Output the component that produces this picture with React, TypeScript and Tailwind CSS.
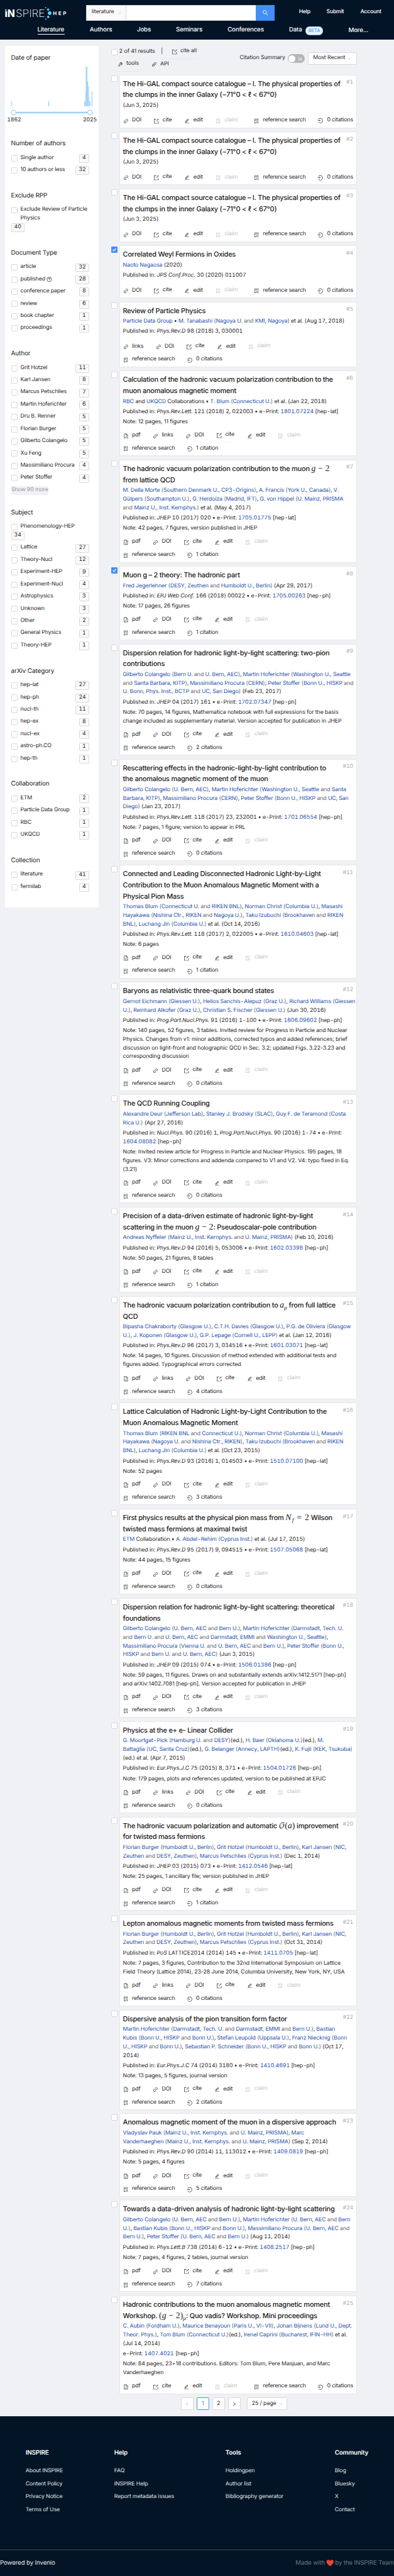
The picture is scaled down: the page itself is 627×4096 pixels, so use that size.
import React from "react";
import {
  AiOutlineApi,
  AiOutlineBarChart,
  AiOutlineDown,
  AiOutlineEdit,
  AiOutlineExport,
  AiOutlineFileDone,
  AiOutlineFilePdf,
  AiOutlineFileSearch,
  AiOutlineLeft,
  AiOutlineLink,
  AiOutlineLogin,
  AiOutlineQuestionCircle,
  AiOutlineRight,
  AiOutlineSearch,
  AiOutlineTool,
} from "react-icons/ai";

/* ---------- inline markup: {link}, *italic*, ~muted~ ---------- */

function Rich({ text }: { text: string }) {
  const parts = text.split(/(\{[^}]*\}|\*[^*]*\*|~[^~]*~)/).filter(Boolean);
  return (
    <>
      {parts.map((p, i) => {
        const inner = p.slice(1, -1);
        if (p[0] === "{") return <a key={i} className="text-[#1f50ae]">{inner}</a>;
        if (p[0] === "*") return <i key={i}>{inner}</i>;
        if (p[0] === "~") return <span key={i} className="text-[#666666]">{inner}</span>;
        return <span key={i}>{p}</span>;
      })}
    </>
  );
}

function muteAffiliations(line: string) {
  return line
    .replace(/\((?=\{)/g, "~(~")
    .replace(/\}\)/g, "}~)~")
    .replace(/\band(?= \{|$)/g, "~and~");
}

/* ---------- math in titles ---------- */

const serif = "font-['Liberation_Serif',serif] font-normal tracking-normal text-[22px] leading-none";

const GMinus2 = () => (
  <span className={serif}>
    <i>g</i>
    <span className="px-[6px]">−</span>2
  </span>
);
const AMu = () => (
  <span className={serif}>
    <i>a</i>
    <span className="relative top-[5px] text-[15px] italic">μ</span>
  </span>
);
const NfEq2 = () => (
  <span className={serif}>
    <i>N</i>
    <span className="relative top-[4px] pl-[2px] text-[15px] italic">f</span>
    <span className="px-[8px]">=</span>2
  </span>
);
const BigOA = () => (
  <span className={serif}>
    <span className="font-['DejaVu_Math_TeX_Gyre','DejaVu_Serif',serif] text-[20px]">𝒪</span>(<i>a</i>)
  </span>
);
const GMinus2Mu = () => (
  <span className={serif}>
    (<i>g</i>
    <span className="px-[6px]">−</span>2)
    <span className="relative top-[5px] text-[15px] italic">μ</span>
  </span>
);

/* ---------- data ---------- */

type Paper = {
  h: string;
  title: React.ReactNode[];
  authors: string[];
  pub?: string[];
  note?: string[];
  acts: string[];
  cites: string;
  checked?: boolean;
  single?: boolean;
};

const hiGal: Paper = {
  h: "h-[144.5px]",
  title: ["The Hi-GAL compact source catalogue – I. The physical properties of", "the clumps in the inner Galaxy (−71°0 < ℓ < 67°0)"],
  authors: ["(Jun 3, 2025)"],
  acts: ["DOI", "cite", "edit", "claim"],
  cites: "0 citations",
  single: true,
};
const STD = ["pdf", "DOI", "cite", "edit", "claim"];
const WITH_LINKS = ["pdf", "links", "DOI", "cite", "edit", "claim"];

const papers: Paper[] = [
  hiGal,
  hiGal,
  hiGal,
  {
    h: "h-[142.4px]",
    title: ["Correlated Weyl Fermions in Oxides"],
    authors: ["{Naoto Nagaosa} (2020)"],
    pub: ["Published in: *JPS Conf.Proc.* 30 (2020) 011007"],
    acts: ["DOI", "cite", "edit", "claim"],
    cites: "0 citations",
    checked: true,
    single: true,
  },
  {
    h: "h-[175.2px]",
    title: ["Review of Particle Physics"],
    authors: ["{Particle Data Group} • {M. Tanabashi} ({Nagoya U.} and {KMI, Nagoya}) et al. (Aug 17, 2018)"],
    pub: ["Published in: *Phys.Rev.D* 98 (2018) 3, 030001"],
    acts: ["links", "DOI", "cite", "edit", "claim"],
    cites: "0 citations",
  },
  {
    h: "h-[225.8px]",
    title: ["Calculation of the hadronic vacuum polarization contribution to the", "muon anomalous magnetic moment"],
    authors: ["{RBC} and\u00a0{UKQCD} Collaborations • {T. Blum} ({Connecticut U.}) et al. (Jan 22, 2018)"],
    pub: ["Published in: *Phys.Rev.Lett.* 121 (2018) 2, 022003 • e-Print: {1801.07224} [hep-lat]"],
    note: ["Note: 12 pages, 11 figures"],
    acts: WITH_LINKS,
    cites: "1 citation",
  },
  {
    h: "h-[270.2px]",
    title: [<>The hadronic vacuum polarization contribution to the muon <GMinus2 /></>, "from lattice QCD"],
    authors: [
      "{M. Della Morte} ({Southern Denmark U., CP3-Origins}), {A. Francis} ({York U., Canada}), {V.}",
      "{Gülpers} ({Southampton U.}), {G. Herdoíza} ({Madrid, IFT}), {G. von Hippel} ({U. Mainz, PRISMA}",
      "and {Mainz U., Inst. Kernphys.}) et al. (May 4, 2017)",
    ],
    pub: ["Published in: *JHEP* 10 (2017) 020 • e-Print: {1705.01775} [hep-lat]"],
    note: ["Note: 42 pages, 7 figures, version published in JHEP"],
    acts: STD,
    cites: "1 citation",
  },
  {
    h: "h-[197px]",
    title: ["Muon g – 2 theory: The hadronic part"],
    authors: ["{Fred Jegerlehner} ({DESY, Zeuthen} and {Humboldt U., Berlin}) (Apr 29, 2017)"],
    pub: ["Published in: *EPJ Web Conf.* 166 (2018) 00022 • e-Print: {1705.00263} [hep-ph]"],
    note: ["Note: 17 pages, 26 figures"],
    acts: STD,
    cites: "1 citation",
    checked: true,
  },
  {
    h: "h-[291.9px]",
    title: ["Dispersion relation for hadronic light-by-light scattering: two-pion", "contributions"],
    authors: [
      "{Gilberto Colangelo} ({Bern U.} and {U. Bern, AEC}), {Martin Hoferichter} ({Washington U., Seattle}",
      "and {Santa Barbara, KITP}), {Massimiliano Procura} ({CERN}), {Peter Stoffer} ({Bonn U., HISKP} and",
      "{U. Bonn, Phys. Inst., BCTP} and {UC, San Diego}) (Feb 23, 2017)",
    ],
    pub: ["Published in: *JHEP* 04 (2017) 161 • e-Print: {1702.07347} [hep-ph]"],
    note: [
      "Note: 70 pages, 14 figures, Mathematica notebook with full expressions for the basis",
      "change included as supplementary material. Version accepted for publication in JHEP",
    ],
    acts: STD,
    cites: "2 citations",
  },
  {
    h: "h-[268.9px]",
    title: ["Rescattering effects in the hadronic-light-by-light contribution to", "the anomalous magnetic moment of the muon"],
    authors: [
      "{Gilberto Colangelo} ({U. Bern, AEC}), {Martin Hoferichter} ({Washington U., Seattle} and {Santa}",
      "{Barbara, KITP}), {Massimiliano Procura} ({CERN}), {Peter Stoffer} ({Bonn U., HISKP} and {UC, San}",
      "{Diego}) (Jan 23, 2017)",
    ],
    pub: ["Published in: *Phys.Rev.Lett.* 118 (2017) 23, 232001 • e-Print: {1701.06554} [hep-ph]"],
    note: ["Note: 7 pages, 1 figure; version to appear in PRL"],
    acts: STD,
    cites: "0 citations",
  },
  {
    h: "h-[297.2px]",
    title: [
      "Connected and Leading Disconnected Hadronic Light-by-Light",
      "Contribution to the Muon Anomalous Magnetic Moment with a",
      "Physical Pion Mass",
    ],
    authors: [
      "{Thomas Blum} ({Connecticut U.} and {RIKEN BNL}), {Norman Christ} ({Columbia U.}), {Masashi}",
      "{Hayakawa} ({Nishina Ctr., RIKEN} and {Nagoya U.}), {Taku Izubuchi} ({Brookhaven} and {RIKEN}",
      "{BNL}), {Luchang Jin} ({Columbia U.}) et al. (Oct 14, 2016)",
    ],
    pub: ["Published in: *Phys.Rev.Lett.* 118 (2017) 2, 022005 • e-Print: {1610.04603} [hep-lat]"],
    note: ["Note: 6 pages"],
    acts: STD,
    cites: "1 citation",
  },
  {
    h: "h-[285.9px]",
    title: ["Baryons as relativistic three-quark bound states"],
    authors: [
      "{Gernot Eichmann} ({Giessen U.}), {Helios Sanchis-Alepuz} ({Graz U.}), {Richard Williams} ({Giessen}",
      "{U.}), {Reinhard Alkofer} ({Graz U.}), {Christian S. Fischer} ({Giessen U.}) (Jun 30, 2016)",
    ],
    pub: ["Published in: *Prog.Part.Nucl.Phys.* 91 (2016) 1-100 • e-Print: {1606.09602} [hep-ph]"],
    note: [
      "Note: 140 pages, 52 figures, 3 tables. Invited review for Progress in Particle and Nuclear",
      "Physics. Changes from v1: minor additions, corrected typos and added references; brief",
      "discussion on light-front and holographic QCD in Sec. 3.2; updated Figs. 3.22-3.23 and",
      "corresponding discussion",
    ],
    acts: STD,
    cites: "0 citations",
  },
  {
    h: "h-[284.9px]",
    title: ["The QCD Running Coupling"],
    authors: [
      "{Alexandre Deur} ({Jefferson Lab}), {Stanley J. Brodsky} ({SLAC}), {Guy F. de Teramond} ({Costa}",
      "{Rica U.}) (Apr 27, 2016)",
    ],
    pub: [
      "Published in: *Nucl.Phys.* 90 (2016) 1, *Prog.Part.Nucl.Phys.* 90 (2016) 1-74 • e-Print:",
      "{1604.08082} [hep-ph]",
    ],
    note: [
      "Note: Invited review article for Progress in Particle and Nuclear Physics. 195 pages, 18",
      "figures. V3: Minor corrections and addenda compared to V1 and V2. V4: typo fixed in Eq.",
      "(3.21)",
    ],
    acts: STD,
    cites: "0 citations",
  },
  {
    h: "h-[226.2px]",
    title: [
      "Precision of a data-driven estimate of hadronic light-by-light",
      <>scattering in the muon <GMinus2 />: Pseudoscalar-pole contribution</>,
    ],
    authors: ["{Andreas Nyffeler} ({Mainz U., Inst. Kernphys.} and {U. Mainz, PRISMA}) (Feb 10, 2016)"],
    pub: ["Published in: *Phys.Rev.D* 94 (2016) 5, 053006 • e-Print: {1602.03398} [hep-ph]"],
    note: ["Note: 50 pages, 21 figures, 8 tables"],
    acts: STD,
    cites: "1 citation",
  },
  {
    h: "h-[270.8px]",
    title: [<>The hadronic vacuum polarization contribution to <AMu /> from full lattice</>, "QCD"],
    authors: [
      "{Bipasha Chakraborty} ({Glasgow U.}), {C.T.H. Davies} ({Glasgow U.}), {P.G. de Oliviera} ({Glasgow}",
      "{U.}), {J. Koponen} ({Glasgow U.}), {G.P. Lepage} ({Cornell U., LEPP}) et al. (Jan 12, 2016)",
    ],
    pub: ["Published in: *Phys.Rev.D* 96 (2017) 3, 034516 • e-Print: {1601.03071} [hep-lat]"],
    note: [
      "Note: 14 pages, 10 figures. Discussion of method extended with additional tests and",
      "figures added. Typographical errors corrected",
    ],
    acts: WITH_LINKS,
    cites: "4 citations",
  },
  {
    h: "h-[269.1px]",
    title: ["Lattice Calculation of Hadronic Light-by-Light Contribution to the", "Muon Anomalous Magnetic Moment"],
    authors: [
      "{Thomas Blum} ({RIKEN BNL} and {Connecticut U.}), {Norman Christ} ({Columbia U.}), {Masashi}",
      "{Hayakawa} ({Nagoya U.} and {Nishina Ctr., RIKEN}), {Taku Izubuchi} ({Brookhaven} and {RIKEN}",
      "{BNL}), {Luchang Jin} ({Columbia U.}) et al. (Oct 23, 2015)",
    ],
    pub: ["Published in: *Phys.Rev.D* 93 (2016) 1, 014503 • e-Print: {1510.07100} [hep-lat]"],
    note: ["Note: 52 pages"],
    acts: STD,
    cites: "3 citations",
  },
  {
    h: "h-[226.1px]",
    title: [<>First physics results at the physical pion mass from <NfEq2 /> Wilson</>, "twisted mass fermions at maximal twist"],
    authors: ["{ETM} Collaboration • {A. Abdel-Rehim} ({Cyprus Inst.}) et al. (Jul 17, 2015)"],
    pub: ["Published in: *Phys.Rev.D* 95 (2017) 9, 094515 • e-Print: {1507.05068} [hep-lat]"],
    note: ["Note: 44 pages, 15 figures"],
    acts: STD,
    cites: "0 citations",
  },
  {
    h: "h-[313px]",
    title: ["Dispersion relation for hadronic light-by-light scattering: theoretical", "foundations"],
    authors: [
      "{Gilberto Colangelo} ({U. Bern, AEC} and {Bern U.}), {Martin Hoferichter} ({Darmstadt, Tech. U.}",
      "and {Bern U.} and {U. Bern, AEC} and {Darmstadt, EMMI} and {Washington U., Seattle}),",
      "{Massimiliano Procura} ({Vienna U.} and {U. Bern, AEC} and {Bern U.}), {Peter Stoffer} ({Bonn U.,}",
      "{HISKP} and {Bern U.} and {U. Bern, AEC}) (Jun 3, 2015)",
    ],
    pub: ["Published in: *JHEP* 09 (2015) 074 • e-Print: {1506.01386} [hep-ph]"],
    note: [
      "Note: 59 pages, 11 figures. Draws on and substantially extends arXiv:1412.5171 [hep-ph]",
      "and arXiv:1402.7081 [hep-ph]. Version accepted for publication in JHEP",
    ],
    acts: STD,
    cites: "3 citations",
  },
  {
    h: "h-[241.9px]",
    title: ["Physics at the e+ e- Linear Collider"],
    authors: [
      "{G. Moortgat-Pick} ({Hamburg U.} and {DESY})(ed.), {H. Baer} ({Oklahoma U.})(ed.), {M.}",
      "{Battaglia} ({UC, Santa Cruz})(ed.), {G. Belanger} ({Annecy, LAPTH})(ed.), {K. Fujii} ({KEK, Tsukuba})",
      "(ed.) et al. (Apr 7, 2015)",
    ],
    pub: ["Published in: *Eur.Phys.J.C* 75 (2015) 8, 371 • e-Print: {1504.01726} [hep-ph]"],
    note: ["Note: 179 pages, plots and references updated, version to be published at EPJC"],
    acts: WITH_LINKS,
    cites: "0 citations",
  },
  {
    h: "h-[248.1px]",
    title: [<>The hadronic vacuum polarization and automatic <BigOA /> improvement</>, "for twisted mass fermions"],
    authors: [
      "{Florian Burger} ({Humboldt U., Berlin}), {Grit Hotzel} ({Humboldt U., Berlin}), {Karl Jansen} ({NIC,}",
      "{Zeuthen} and {DESY, Zeuthen}), {Marcus Petschlies} ({Cyprus Inst.}) (Dec 1, 2014)",
    ],
    pub: ["Published in: *JHEP* 03 (2015) 073 • e-Print: {1412.0546} [hep-lat]"],
    note: ["Note: 25 pages, 1 ancillary file; version published in JHEP"],
    acts: STD,
    cites: "1 citation",
  },
  {
    h: "h-[242px]",
    title: ["Lepton anomalous magnetic moments from twisted mass fermions"],
    authors: [
      "{Florian Burger} ({Humboldt U., Berlin}), {Grit Hotzel} ({Humboldt U., Berlin}), {Karl Jansen} ({NIC,}",
      "{Zeuthen} and {DESY, Zeuthen}), {Marcus Petschlies} ({Cyprus Inst.}) (Oct 31, 2014)",
    ],
    pub: ["Published in: *PoS* LATTICE2014 (2014) 145 • e-Print: {1411.0705} [hep-lat]"],
    note: [
      "Note: 7 pages, 3 figures, Contribution to the 32nd International Symposium on Lattice",
      "Field Theory (Lattice 2014), 23-28 June 2014, Columbia University, New York, NY, USA",
    ],
    acts: WITH_LINKS,
    cites: "0 citations",
  },
  {
    h: "h-[263px]",
    title: ["Dispersive analysis of the pion transition form factor"],
    authors: [
      "{Martin Hoferichter} ({Darmstadt, Tech. U.} and {Darmstadt, EMMI} and {Bern U.}), {Bastian}",
      "{Kubis} ({Bonn U., HISKP} and {Bonn U.}), {Stefan Leupold} ({Uppsala U.}), {Franz Niecknig} ({Bonn}",
      "{U., HISKP} and {Bonn U.}), {Sebastian P. Schneider} ({Bonn U., HISKP} and {Bonn U.}) (Oct 17,",
      "2014)",
    ],
    pub: ["Published in: *Eur.Phys.J.C* 74 (2014) 3180 • e-Print: {1410.4691} [hep-ph]"],
    note: ["Note: 13 pages, 5 figures, journal version"],
    acts: STD,
    cites: "2 citations",
  },
  {
    h: "h-[220px]",
    title: ["Anomalous magnetic moment of the muon in a dispersive approach"],
    authors: [
      "{Vladyslav Pauk} ({Mainz U., Inst. Kernphys.} and {U. Mainz, PRISMA}), {Marc}",
      "{Vanderhaeghen} ({Mainz U., Inst. Kernphys.} and {U. Mainz, PRISMA}) (Sep 2, 2014)",
    ],
    pub: ["Published in: *Phys.Rev.D* 90 (2014) 11, 113012 • e-Print: {1409.0819} [hep-ph]"],
    note: ["Note: 5 pages, 4 figures"],
    acts: STD,
    cites: "5 citations",
  },
  {
    h: "h-[242px]",
    title: ["Towards a data-driven analysis of hadronic light-by-light scattering"],
    authors: [
      "{Gilberto Colangelo} ({U. Bern, AEC} and {Bern U.}), {Martin Hoferichter} ({U. Bern, AEC} and {Bern}",
      "{U.}), {Bastian Kubis} ({Bonn U., HISKP} and {Bonn U.}), {Massimiliano Procura} ({U. Bern, AEC} and",
      "{Bern U.}), {Peter Stoffer} ({U. Bern, AEC} and {Bern U.}) (Aug 11, 2014)",
    ],
    pub: ["Published in: *Phys.Lett.B* 738 (2014) 6-12 • e-Print: {1408.2517} [hep-ph]"],
    note: ["Note: 7 pages, 4 figures, 2 tables, journal version"],
    acts: STD,
    cites: "7 citations",
  },
  {
    h: "h-[259.2px]",
    title: [
      "Hadronic contributions to the muon anomalous magnetic moment",
      <>Workshop. <GMinus2Mu />: Quo vadis? Workshop. Mini proceedings</>,
    ],
    authors: [
      "{C. Aubin} ({Fordham U.}), {Maurice Benayoun} ({Paris U., VI-VII}), {Johan Bijnens} ({Lund U., Dept.}",
      "{Theor. Phys.}), {Tom Blum} ({Connecticut U.})(ed.), {Irenel Caprini} ({Bucharest, IFIN-HH}) et al.",
      "(Jul 14, 2014)",
    ],
    pub: ["e-Print: {1407.4021} [hep-ph]"],
    note: ["Note: 84 pages, 23+18 contributions. Editors: Tom Blum, Pere Masjuan, and Marc", "Vanderhaeghen"],
    acts: ["pdf", "cite", "edit", "claim"],
    cites: "0 citations",
    single: true,
  },
];

type Facet = { title: string; rows: [string, number][]; more?: string };

const facets: Facet[] = [
  { title: "Number of authors", rows: [["Single author", 4], ["10 authors or less", 32]] },
  { title: "Exclude RPP", rows: [["Exclude Review of Particle Physics", 40]] },
  {
    title: "Document Type",
    rows: [["article", 32], ["published", 28], ["conference paper", 8], ["review", 6], ["book chapter", 1], ["proceedings", 1]],
  },
  {
    title: "Author",
    rows: [
      ["Grit Hotzel", 11], ["Karl Jansen", 8], ["Marcus Petschlies", 7], ["Martin Hoferichter", 6], ["Dru B. Renner", 5],
      ["Florian Burger", 5], ["Gilberto Colangelo", 5], ["Xu Feng", 5], ["Massimiliano Procura", 4], ["Peter Stoffer", 4],
    ],
    more: "Show 90 more",
  },
  {
    title: "Subject",
    rows: [
      ["Phenomenology-HEP", 34], ["Lattice", 27], ["Theory-Nucl", 12], ["Experiment-HEP", 9], ["Experiment-Nucl", 4],
      ["Astrophysics", 3], ["Unknown", 3], ["Other", 2], ["General Physics", 1], ["Theory-HEP", 1],
    ],
  },
  {
    title: "arXiv Category",
    rows: [["hep-lat", 27], ["hep-ph", 24], ["nucl-th", 11], ["hep-ex", 8], ["nucl-ex", 4], ["astro-ph.CO", 1], ["hep-th", 1]],
  },
  { title: "Collaboration", rows: [["ETM", 2], ["Particle Data Group", 1], ["RBC", 1], ["UKQCD", 1]] },
  { title: "Collection", rows: [["literature", 41], ["fermilab", 4]] },
];

/* ---------- small parts ---------- */

function Checkbox({ checked = false }: { checked?: boolean }) {
  return checked ? (
    <div className="flex size-4 shrink-0 items-center justify-center rounded-[2px] bg-[#448ef7]">
      <svg viewBox="0 0 16 16" className="size-4" fill="none" stroke="white" strokeWidth="2">
        <path d="M4 8.2 7 11l4.8-6.4" />
      </svg>
    </div>
  ) : (
    <div className="size-4 shrink-0 rounded-[2px] border border-[#d9d9d9] bg-white" />
  );
}

const actionMeta: Record<string, { icon: React.ReactNode; w: string }> = {
  pdf: { icon: <AiOutlineFilePdf />, w: "w-[22px]" },
  links: { icon: <AiOutlineLink />, w: "w-[29px]" },
  DOI: { icon: <AiOutlineLink />, w: "w-6" },
  cite: { icon: <AiOutlineExport />, w: "w-6" },
  edit: { icon: <AiOutlineEdit />, w: "w-[25px]" },
  claim: { icon: <AiOutlineFileDone />, w: "w-[34px]" },
};

function Action({ kind }: { kind: string }) {
  const m = actionMeta[kind];
  const tone = kind === "claim" ? "text-[#bfbfbf]" : "text-[#262626]";
  if (kind === "cite")
    return (
      <span className={`mt-[0.5px] flex h-[34px] items-center gap-[8px] border-b border-black/[0.025] ${tone}`}>
        <span className="text-[15px]">{m.icon}</span>
        <span className={`mb-[2px] ${m.w}`}>{kind}</span>
      </span>
    );
  return (
    <span className={`flex h-[33.3px] items-center gap-[9px] ${tone}`}>
      <span className="text-[14px]">{m.icon}</span>
      <span className={`${m.w} ${kind === "claim" ? "mb-[1px]" : ""}`}>{kind}</span>
    </span>
  );
}

function PaperCard({ paper, n }: { paper: Paper; n: number }) {
  const trailing = (
    <>
      <span className="flex h-[33.3px] items-center gap-[9px]">
        <AiOutlineFileSearch className="text-[14px]" />
        <span className="w-[109px]">reference search</span>
      </span>
      <span className="flex h-[33.3px] items-center gap-[9px]">
        <AiOutlineLogin className="text-[15px]" />
        <span>{paper.cites}</span>
      </span>
    </>
  );
  return (
    <div className={`flex pb-[9px] ${paper.h}`}>
      <div className="w-[20.6px] pt-[2.5px]">
        <Checkbox checked={paper.checked} />
      </div>
      <article className="flex w-[604px] flex-col border border-[#e6e7ea] bg-white px-2 pt-[8px]">
        <div className="flex justify-between">
          <h2 className="text-[17.6px] leading-[28.3px] font-medium tracking-[-0.4px] text-[#1a1a1a]">
            {paper.title.map((t, i) => (
              <div key={i} className="h-[28.3px]">{t}</div>
            ))}
          </h2>
          <span className="-ml-4 pt-px leading-5 text-[#acacac] tabular-nums">#{n}</span>
        </div>
        <div className="mt-[2.8px] leading-[22px] tabular-nums">
          {paper.authors.map((l, i) => (
            <div key={i}><Rich text={muteAffiliations(l)} /></div>
          ))}
        </div>
        {paper.pub && (
          <div className="mt-1 leading-[22px] tabular-nums">
            {paper.pub.map((l, i) => (
              <div key={i}><Rich text={l} /></div>
            ))}
          </div>
        )}
        {paper.note && (
          <div className="mt-1 leading-[22px]">
            {paper.note.map((l, i) => (
              <div key={i}>{l}</div>
            ))}
          </div>
        )}
        <div className="mt-auto tracking-[-0.2px]">
          <div className="flex h-[33.3px] gap-[31px]">
            {paper.acts.map((a) => (
              <Action key={a} kind={a} />
            ))}
            {paper.single && <div className="ml-auto flex gap-[30px]">{trailing}</div>}
          </div>
          {!paper.single && <div className="flex gap-[30px]">{trailing}</div>}
        </div>
      </article>
    </div>
  );
}

function Count({ n }: { n: number }) {
  return (
    <div className="flex h-[22px] items-center justify-center self-start rounded-[2px] border border-[#d9d9d9] bg-[#fafafa] px-[6.5px] tabular-nums">
      {n}
    </div>
  );
}

function FacetRow({ label, n }: { label: string; n: number }) {
  const stacked = label === "Phenomenology-HEP" || label.startsWith("Exclude Review");
  if (stacked)
    return (
      <div className={`flex flex-col pt-[4.5px] ${label.startsWith("Exclude") ? "h-[75px]" : "h-[53px]"}`}>
        <div className="flex gap-2 leading-[22px]">
          <div className="pt-[3px]"><Checkbox /></div>
          <span className="w-[174px] whitespace-normal">{label}</span>
        </div>
        <Count n={n} />
      </div>
    );
  return (
    <div className="flex h-[31px] items-center gap-2">
      <Checkbox />
      <span className="flex flex-1 items-center gap-1">
        {label}
        {label === "published" && <AiOutlineQuestionCircle className="text-[14px]" />}
      </span>
      <div className="mt-px"><Count n={n} /></div>
    </div>
  );
}

function DateHistogram() {
  const bars = [
    [28, 2, 13], [121.5, 2.5, 13], [213, 3, 13], [216, 1, 38], [217, 4, 100], [221, 2, 63],
    [223, 2, 51], [225, 1, 26], [226, 2.7, 13], [232, 2, 38],
  ];
  return (
    <svg viewBox="0 0 238 140" className="block h-[140px] w-[238px]">
      {bars.map(([x, w, h], i) => (
        <rect key={i} x={x - 12} y={110 - h} width={w} height={h} fill="#a1d2fa" />
      ))}
      <rect x="22" y="124" width="194" height="4" fill="#a1d2fa" />
      <circle cx="22" cy="126" r="6" fill="white" stroke="#a1d2fa" strokeWidth="2" />
      <circle cx="216" cy="126" r="6" fill="white" stroke="#a1d2fa" strokeWidth="2" />
    </svg>
  );
}

function Logo() {
  return (
    <svg viewBox="0 0 170 40" className="block h-10 w-[170px]" fill="white">
      <text x="-1" y="30.7" fontSize="26.5" fontWeight="800" textLength="26" lengthAdjust="spacingAndGlyphs">ıN</text>
      <circle cx="2.2" cy="13" r="2.3" fill="#63d1fb" />
      <text x="27" y="30.7" fontSize="26.5" fontWeight="200" textLength="74" lengthAdjust="spacingAndGlyphs">SPIRE</text>
      <g fill="#63d1fb">
        <circle cx="103.3" cy="6.7" r="1.6" />
        <circle cx="109.4" cy="11.4" r="2.8" />
        <circle cx="113.4" cy="20.4" r="4.6" />
        <circle cx="109.7" cy="30" r="3" />
        <circle cx="103.5" cy="35.4" r="1.6" />
      </g>
      <text x="121.5" y="25" fontSize="12.8" fontWeight="700" textLength="34" lengthAdjust="spacing">HEP</text>
    </svg>
  );
}

const navItems: [string, string][] = [
  ["Authors", "w-14"],
  ["Jobs", "w-[35px]"],
  ["Seminars", "w-[67px]"],
  ["Conferences", "w-[92px]"],
];

const footerCols: { title: string; w: string; items: string[] }[] = [
  { title: "INSPIRE", w: "w-[225px]", items: ["About INSPIRE", "Content Policy", "Privacy Notice", "Terms of Use"] },
  { title: "Help", w: "w-[282.5px]", items: ["FAQ", "INSPIRE Help", "Report metadata issues"] },
  { title: "Tools", w: "w-[277.5px]", items: ["Holdingpen", "Author list", "Bibliography generator"] },
  { title: "Community", w: "w-[100px]", items: ["Blog", "Bluesky", "X", "Contact"] },
];

/* ---------- page ---------- */

export default function App() {
  return (
    <div className="w-[1000.5px] overflow-hidden bg-[#f0f1f5] font-['Inter',sans-serif] text-[14px] leading-[22px] tracking-[-0.13px] whitespace-nowrap text-[#262626] [text-rendering:geometricPrecision] [zoom:0.6267]">
      <header className="h-[100px] bg-[#021426] font-medium text-white">
        <div className="flex h-[52px] pt-3 pl-3">
          <Logo />
          <div className="ml-[37px] flex h-10 w-[479px]">
            <div className="flex w-[102px] items-center gap-[9px] border border-[#d9d9d9] bg-[#fafafa] pl-3 font-normal text-[#262626]">
              <span className="w-[57px]">literature</span>
              <AiOutlineDown className="text-[11px] text-[#bfbfbf]" />
            </div>
            <div className="flex-1 border-y border-[#d9d9d9] bg-white" />
            <div className="flex w-12 items-center justify-center bg-[#448ef7] text-[17px]">
              <AiOutlineSearch />
            </div>
          </div>
          <nav className="ml-[61px] flex h-10 items-center tracking-[-0.4px]">
            <span className="w-[70px]">Help</span>
            <span className="w-[86px]">Submit</span>
            <span>Account</span>
          </nav>
        </div>
        <nav className="flex h-12 items-center gap-16 pt-[1.5px] pl-[95px] text-[15.6px] tracking-[-0.35px]">
          <span className="mt-[0.5px] flex h-[20.5px] w-[69px] items-center border-b-2 border-white pt-px">Literature</span>
          {navItems.map(([label, w]) => (
            <span key={label} className={w}>{label}</span>
          ))}
          <span className="flex items-center gap-[7px]">
            <span className="w-[34px]">Data</span>
            <span className="mt-[2.5px] flex h-[22px] w-[46px] items-center justify-center rounded-[10px] border border-[#98ccfb] bg-[#e8f5ff] text-[12px] font-normal tracking-[-0.1px] text-[#448ef7]">
              BETA
            </span>
          </span>
          <span className="mt-[2.5px]">More...</span>
        </nav>
      </header>

      <main className="flex h-[6031px] items-start">
        <aside className="mt-4 ml-3 h-[2187px] w-[238px] bg-white tracking-[-0.2px]">
          <h3 className="pt-[19px] pl-4 text-[16px] leading-[25px] tracking-[-0.23px] text-[#1a1a1a]">Date of paper</h3>
          <DateHistogram />
          <div className="flex h-[53px] justify-between pr-[4px] pl-[6px] leading-[10px] tabular-nums">
            <span>1862</span>
            <span>2025</span>
          </div>
          <div className="flex flex-col gap-[37px] pr-6 pl-4">
            {facets.map((f) => (
              <section key={f.title}>
                <h3 className="mb-2 text-[16px] leading-[25px] tracking-[-0.23px] text-[#1a1a1a]">{f.title}</h3>
                {f.rows.map(([label, n]) => (
                  <FacetRow key={label} label={label} n={n} />
                ))}
                {f.more && (
                  <div className="h-[23.2px] pt-[5px]">
                    <span className="flex h-[22px] w-[95px] items-center justify-center rounded-[2px] bg-[#f0f1f5] text-[#9a9a9a]">
                      {f.more}
                    </span>
                  </div>
                )}
              </section>
            ))}
          </div>
        </aside>

        <section className="ml-8 w-[624.6px]">
          <div className="flex h-[89.4px] justify-between">
            <div>
              <div className="mt-4 flex h-8 items-center">
                <Checkbox />
                <span className="ml-[5px] w-[93px]">2 of 41 results</span>
                <span className="ml-[13px] w-[26px]">|</span>
                <span className="mt-[2px] flex h-[33px] items-center gap-[8px] border-b border-black/[0.03]">
                  <AiOutlineExport className="text-[15px]" />
                  <span className="mb-[2px]">cite all</span>
                </span>
              </div>
              <div className="ml-4 flex h-8 items-center">
                <span className="mt-[2px] flex h-[33px] w-[55px] items-center gap-[9px] border-b border-black/[0.03]">
                  <AiOutlineTool className="text-[14px]" />
                  <span className="mb-[2px]">tools</span>
                </span>
                <span className="ml-[31px] flex items-center gap-[9px]">
                  <AiOutlineApi className="text-[14px]" />
                  API
                </span>
              </div>
            </div>
            <div className="mt-[33px] flex h-8 items-center">
              <span className="w-[115px]">Citation Summary</span>
              <span className="ml-[7px] flex h-[22px] w-11 items-center justify-between rounded-full bg-[#b5b6b9] pr-[6px] pl-[2px]">
                <span className="size-[18px] rounded-full bg-white" />
                <AiOutlineBarChart className="text-[13px] text-white" />
              </span>
              <span className="ml-2 flex h-8 w-[124px] items-center justify-between border border-[#d9d9d9] bg-white pr-[11px] pl-[11px]">
                Most Recent
                <AiOutlineDown className="text-[11px] text-[#bfbfbf]" />
              </span>
            </div>
          </div>

          {papers.map((p, i) => (
            <PaperCard key={i} paper={p} n={i + 1} />
          ))}

          <div className="ml-[177px] flex h-8 gap-2">
            <span className="flex w-8 items-center justify-center rounded-[2px] border border-[#d9d9d9] bg-white text-[12px] text-[#bfbfbf]">
              <AiOutlineLeft />
            </span>
            <span className="flex w-8 items-center justify-center rounded-[2px] border border-[#448ef7] bg-white font-medium text-[#448ef7]">1</span>
            <span className="flex w-8 items-center justify-center rounded-[2px] border border-[#d9d9d9] bg-white">2</span>
            <span className="flex w-8 items-center justify-center rounded-[2px] border border-[#d9d9d9] bg-white text-[12px]">
              <AiOutlineRight />
            </span>
            <span className="ml-2 flex w-[103px] items-center justify-between rounded-[2px] border border-[#d9d9d9] bg-white px-[11px]">
              25 / page
              <AiOutlineDown className="text-[11px] text-[#bfbfbf]" />
            </span>
          </div>
        </section>
      </main>

      <footer className="h-[406px] bg-[#021426] text-[#e3e5e8]">
        <div className="flex h-[340px] border-b border-[#3f4d5b] pt-[79px] pl-[65px]">
          {footerCols.map((c) => (
            <div key={c.title} className={c.w}>
              <h4 className="mb-[22px] text-[15.7px] leading-[26px] font-semibold tracking-[-0.3px] text-white">{c.title}</h4>
              {c.items.map((it) => (
                <div key={it} className="h-[33px] leading-[25px] tracking-[-0.16px]">{it}</div>
              ))}
            </div>
          ))}
        </div>
        <div className="flex h-[65px] items-center justify-between text-[15.6px] tracking-[-0.25px]">
          <span>Powered by Invenio</span>
          <span className="flex items-center text-[#6a7480]">
            Made with
            <svg viewBox="0 0 20 20" className="mx-[3px] size-5" fill="#ea4435">
              <path d="M10 18.5C7 15.5 1 11.500 1 6.600 1 3.700 3 2 5.400 2 7.500 2 9.200 3.200 10 5c.8-1.800 2.500-3 4.600-3C17 2 19 3.700 19 6.600c0 4.900-6 8.900-9 11.900z" />
            </svg>
            by the INSPIRE Team
          </span>
        </div>
      </footer>
    </div>
  );
}
